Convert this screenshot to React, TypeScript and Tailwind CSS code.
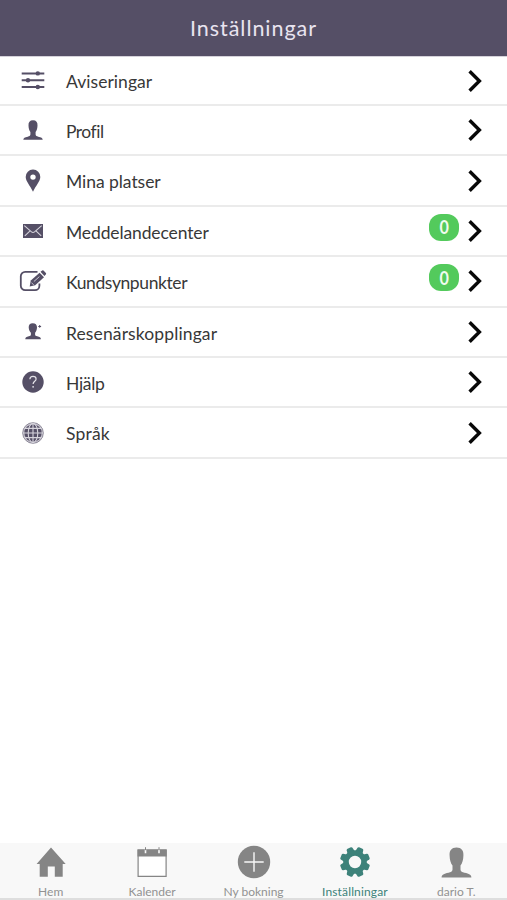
import React from 'react';

const ChevronIcon = () => (
  <svg width="18" height="26" viewBox="0 0 18 26" fill="none">
    <path d="M3.6 3.2 L13.4 13 L3.6 22.8" stroke="#080808" strokeWidth="3.4" />
  </svg>
);

const SlidersIcon = () => (
  <svg width="28" height="28" viewBox="0 0 28 28" fill="#554f66">
    <path d="M2.7 5.4h22.6v2.1H2.7zM2.7 12.2h22.6v2.1H2.7zM2.7 19h22.6v2.1H2.7z" />
    <circle cx="18.8" cy="6.4" r="2.2" />
    <circle cx="9" cy="13.2" r="2.2" />
    <circle cx="18.8" cy="20" r="2.2" />
  </svg>
);

const PersonIcon = ({ size = 28 }: { size?: number }) => (
  <svg width={size} height={size} viewBox="0 0 28 28" fill="currentColor">
    <path d="M14 4.3c-3.2 0-4.7 2-4.5 5.1.1 2.9.7 5.1 1.9 6.5v2.7c0 1.3-1.2 1.7-2.6 2.1-3 .6-4.5 1.3-4.5 3.1h19.4c0-1.8-1.5-2.5-4.5-3.1-1.4-.4-2.6-.8-2.6-2.1v-2.7c1.2-1.4 1.8-3.6 1.9-6.5.2-3.1-1.3-5.1-4.5-5.1z" />
  </svg>
);

const PinIcon = () => (
  <svg width="28" height="28" viewBox="0 0 28 28" fill="#554f66">
    <path fillRule="evenodd" d="M14 2.6a7.2 7.2 0 0 0-7.3 7.3c0 4.3 4.3 8.3 7.3 14.8 3-6.5 7.3-10.5 7.3-14.8A7.2 7.2 0 0 0 14 2.6zm0 4.8a2.7 2.7 0 1 1 0 5.4 2.7 2.7 0 0 1 0-5.4z" />
  </svg>
);

const MailIcon = () => (
  <svg width="28" height="28" viewBox="0 0 28 28" fill="none">
    <path d="M4 7h20v14H4z" fill="#554f66" />
    <path d="M5.3 8.6l7.2 6.3q1.5 1.2 3 0l7.2-6.3M5.8 18.8l5-4.7M22.2 18.8l-5-4.7" stroke="#d6d4dc" strokeWidth="1.1" />
  </svg>
);

const EditIcon = () => (
  <svg width="28" height="28" viewBox="0 0 28 28" fill="none">
    <path d="M18.5 4.8H6.2a4.4 4.4 0 0 0-4.4 4.4v9.5a4.4 4.4 0 0 0 4.4 4.4H16a4.4 4.4 0 0 0 4.4-4.4v-2.2" stroke="#554f66" strokeWidth="1.8" />
    <path d="M10.7 19.6l1.1-6.1 8.8-7.8 4.4 4.6-8.8 7.9z" fill="#554f66" />
    <path d="M21.5 4.8l1.7-1.4q.7-.5 1.3.1l2.4 2.6q.6.8-.1 1.4l-1.4 1.5z" fill="#554f66" />
    <path d="M12.5 15.8l2.3 2.1M14.9 14.5l5.5-4.9" stroke="#d6d4dc" strokeWidth=".9" />
  </svg>
);

const TravellerIcon = () => (
  <svg width="28" height="28" viewBox="0 0 28 28" fill="#554f66">
    <path d="M13.7 5.2c-2.6 0-4.1 1.6-4 4.1.1 2.4 1 4.4 2.2 5.5v2c0 1-.8 1.2-2.1 1.5-2.4.5-3.5 1.2-3.5 2.9h15.6c0-1.7-1.3-2.4-3.7-2.9-1.3-.3-2.1-.5-2.1-1.5v-2c1.1-1.1 1.8-3.1 1.9-5.5.1-2.5-1.6-4.1-4.3-4.1z" />
    <path d="M19.3 7.9h2.8v1h-2.8zM20.2 7.1h1v2.6h-1z" />
  </svg>
);

const HelpIcon = () => (
  <svg width="28" height="28" viewBox="0 0 28 28" fill="none">
    <circle cx="14" cy="14" r="10.7" fill="#554f66" />
    <path d="M10.9 11.2c0-1.8 1.2-2.9 3.1-2.9s3.1 1 3.1 2.6c0 2.4-3 2.4-3 5.1" stroke="#e5e3e9" strokeWidth="1.2" />
    <circle cx="14.1" cy="18.8" r=".9" fill="#e5e3e9" />
  </svg>
);

const GlobeIcon = () => (
  <svg width="28" height="28" viewBox="0 0 28 28" fill="none">
    <circle cx="14" cy="14" r="10.3" fill="#c9c6d0" stroke="#858091" strokeWidth=".9" />
    <circle cx="14" cy="14" r="8.7" fill="#554f66" />
    <g stroke="#d6d4dc" strokeWidth="1.1">
      <path d="M14 4v20M4 14h20M5.5 9.4h17M5.5 18.6h17" />
      <ellipse cx="14" cy="14" rx="4.8" ry="9.6" />
    </g>
  </svg>
);

const HomeIcon = () => (
  <svg width="32" height="32" viewBox="0 0 32 32" fill="#858585">
    <path d="M16 1.5L1.6 18h3.1V30.8h8.1V20.6h7v10.2h7.9V18h3z" />
  </svg>
);

const CalendarIcon = () => (
  <svg width="32" height="32" viewBox="0 0 32 32" fill="none">
    <path d="M2.1 4h28v26.4h-28z" fill="#fff" stroke="#858585" strokeWidth="1.2" />
    <path d="M1.5 3.4h29.2v7.1H1.5z" fill="#858585" />
    <path d="M9.5 3.4v3.8M23 3.4v3.8" stroke="#f8f8f8" strokeWidth="1.6" />
    <path d="M9.5 1.2v3M23 1.2v3" stroke="#858585" strokeWidth="1" />
  </svg>
);

const PlusIcon = () => (
  <svg width="34" height="34" viewBox="0 0 34 34" fill="none">
    <circle cx="17" cy="17" r="16.2" fill="#858585" />
    <path d="M17 7.3v19.4M7.3 17h19.4" stroke="#f8f8f8" strokeWidth="1.4" />
  </svg>
);

const teeth = [22.5, 67.5, 112.5, 157.5, 202.5, 247.5, 292.5, 337.5];

const GearIcon = () => (
  <svg width="32" height="32" viewBox="0 0 32 32" fill="#3d827a">
    {teeth.map((angle) => (
      <path key={angle} d="M12 6.5l.9-4.6q.3-1 1.3-1h3.6q1 0 1.3 1l.9 4.6z" transform={`rotate(${angle} 16 16)`} />
    ))}
    <circle cx="16" cy="16" r="9" stroke="#3d827a" strokeWidth="5.6" fill="none" />
  </svg>
);

const rows = [
  { label: 'Aviseringar', icon: <SlidersIcon />, spacing: 'tracking-[0.05px]' },
  { label: 'Profil', icon: <PersonIcon />, spacing: 'tracking-[-0.5px]' },
  { label: 'Mina platser', icon: <PinIcon />, spacing: 'tracking-[-0.05px]' },
  { label: 'Meddelandecenter', icon: <MailIcon />, badge: 0, spacing: 'tracking-[-0.12px]' },
  { label: 'Kundsynpunkter', icon: <EditIcon />, badge: 0, spacing: 'tracking-[-0.4px]' },
  { label: 'Resenärskopplingar', icon: <TravellerIcon />, spacing: 'tracking-[0.12px]' },
  { label: 'Hjälp', icon: <HelpIcon />, spacing: 'tracking-[-0.3px]' },
  { label: 'Språk', icon: <GlobeIcon />, spacing: 'tracking-[0.2px]' },
];

const tabs = [
  { label: 'Hem', icon: <HomeIcon /> },
  { label: 'Kalender', icon: <CalendarIcon /> },
  { label: 'Ny bokning', icon: <PlusIcon /> },
  { label: 'Inställningar', icon: <GearIcon />, active: true },
  { label: 'dario T.', icon: <PersonIcon size={43} /> },
];

export default function App() {
  return (
    <div className="flex h-[900px] w-full flex-col bg-white font-['Lato',sans-serif]">
      <header className="flex h-14 shrink-0 items-center justify-center bg-[#554f66]">
        <h1 className="pt-px text-[21.5px] leading-none tracking-[0.95px] text-[#e9e4f0]">Inställningar</h1>
      </header>

      <main className="flex-1 border-t border-[#d5d2da]">
        {rows.map((row) => (
          <div
            key={row.label}
            className="flex h-[50.4px] items-center border-b-2 border-[#ebebeb] pr-[23px] pl-[19px] first:h-[49px]"
          >
            <span className="text-[#554f66]">{row.icon}</span>
            <span className={`ml-[19px] pt-[3px] text-[17.5px] leading-none text-[#383838] ${row.spacing}`}>{row.label}</span>
            <span className="ml-auto flex items-center gap-[7px]">
              {row.badge !== undefined && (
                <span className="mb-[7px] flex h-[27px] w-[30px] items-center justify-center rounded-[12px] bg-[#53ca5c] text-[18px] leading-none text-[#effbef]">
                  <span className="scale-x-90 font-bold">{row.badge}</span>
                </span>
              )}
              <ChevronIcon />
            </span>
          </div>
        ))}
      </main>

      <nav className="flex h-[57px] shrink-0 border-b-2 border-[#dedede] bg-[#f8f8f8]">
        {tabs.map((tab) => (
          <div key={tab.label} className="flex flex-1 flex-col items-center">
            <div className="flex h-[38px] items-center justify-center text-[#858585]">{tab.icon}</div>
            <span className={`mt-[5px] text-[12px] leading-none whitespace-nowrap ${tab.active ? 'tracking-[0.15px] text-[#3d827a]' : 'text-[#929292]'}`}>
              {tab.label}
            </span>
          </div>
        ))}
      </nav>
    </div>
  );
}
